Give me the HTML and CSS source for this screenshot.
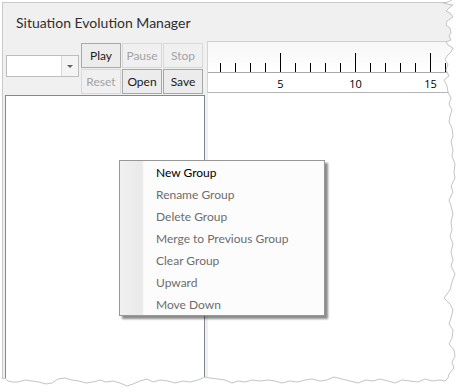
FILE: index.html
```html
<!DOCTYPE html>
<html>
<head>
<meta charset="utf-8">
<link rel="stylesheet" href="styles.css">
</head>
<body>
<div class="window">
  <div class="title">Situation Evolution Manager</div>
  <div class="toolbar">
    <div class="combo">
      <div class="combo-field"></div>
      <div class="combo-btn"><span class="arrow"></span></div>
    </div>
    <div class="buttons">
      <div class="btn">Play</div>
      <div class="btn off">Pause</div>
      <div class="btn off">Stop</div>
      <div class="btn off">Reset</div>
      <div class="btn">Open</div>
      <div class="btn">Save</div>
    </div>
    <div class="ruler">
      <svg class="ruler-svg" width="300" height="50" viewBox="0 0 300 50">
        <rect x="0" y="30" width="300" height="1" fill="#a8a8a8"/>
        <g fill="#000">
          <rect x="12" y="21" width="1" height="9"/>
          <rect x="27" y="21" width="1" height="9"/>
          <rect x="42" y="21" width="1" height="9"/>
          <rect x="57" y="21" width="1" height="9"/>
          <rect x="72" y="11" width="1" height="19"/>
          <rect x="87" y="21" width="1" height="9"/>
          <rect x="102" y="21" width="1" height="9"/>
          <rect x="117" y="21" width="1" height="9"/>
          <rect x="132" y="21" width="1" height="9"/>
          <rect x="147" y="11" width="1" height="19"/>
          <rect x="162" y="21" width="1" height="9"/>
          <rect x="177" y="21" width="1" height="9"/>
          <rect x="192" y="21" width="1" height="9"/>
          <rect x="207" y="21" width="1" height="9"/>
          <rect x="222" y="11" width="1" height="19"/>
          <rect x="237" y="21" width="1" height="9"/>
          <rect x="252" y="21" width="1" height="9"/>
        </g>
        <g class="ruler-labels" fill="#000" text-anchor="middle">
          <text x="72.5" y="46">5</text>
          <text x="147.5" y="46">10</text>
          <text x="222.5" y="46">15</text>
        </g>
      </svg>
    </div>
  </div>
  <div class="content">
    <div class="list"></div>
    <div class="splitter"></div>
    <div class="timeline"></div>
  </div>
</div>

<div class="menu">
  <div class="item">New Group</div>
  <div class="item off">Rename Group</div>
  <div class="item off">Delete Group</div>
  <div class="item off">Merge to Previous Group</div>
  <div class="item off">Clear Group</div>
  <div class="item off">Upward</div>
  <div class="item off">Move Down</div>
</div>

<svg class="torn" width="460" height="392" viewBox="0 0 460 392">
  <path fill="#ffffff" fill-rule="evenodd" d="M-2,-2 H462 V394 H-2 Z M452,-1 L452,0 448,2 443,3 447,4 453,5 449,8 446,11 450,13 453,17 447,21 446,25 450,28 451,33 449,36 451,40 446,42 448,45 453,48 451,52 447,56 445,60 448,64 446,70 449,76 444,80 447,86 448,92 451,98 449,104 452,110 450,116 449,122 452,128 453,136 451,142 453,150 452,156 455,164 454,172 455,178 451,186 453,192 449,200 451,206 453,214 451,222 452,230 450,236 453,244 451,252 453,260 451,266 455,274 452,282 450,290 444,298 450,304 453,310 451,318 449,324 453,330 452,338 449,344 454,350 455,356 452,362 454,368 449,374 448,378 445,381 440,380 432,381 425,379 418,382 410,381 402,380 395,383 388,381 380,379 373,381 366,380 358,383 350,381 342,379 334,377 327,380 320,381 312,379 305,380 298,382 290,381 282,383 275,381 268,380 260,381 252,380 245,382 238,381 232,383 225,380 218,379 210,378 205,377 198,380 190,382 183,381 175,383 168,381 160,380 153,382 147,379 140,381 133,384 127,386 120,383 113,381 106,382 100,380 93,382 86,383 79,381 72,380 65,378 58,379 52,383 46,384 39,382 32,381 25,380 18,382 12,382 8,381 5,378 3,379 -1,379 -1,-1 Z"/>
  <polyline fill="none" stroke="#c4c4c4" stroke-width="1" points="452,0 448,2 443,3 447,4 453,5 449,8 446,11 450,13 453,17 447,21 446,25 450,28 451,33 449,36 451,40 446,42 448,45 453,48 451,52 447,56 445,60 448,64 446,70 449,76 444,80 447,86 448,92 451,98 449,104 452,110 450,116 449,122 452,128 453,136 451,142 453,150 452,156 455,164 454,172 455,178 451,186 453,192 449,200 451,206 453,214 451,222 452,230 450,236 453,244 451,252 453,260 451,266 455,274 452,282 450,290 444,298 450,304 453,310 451,318 449,324 453,330 452,338 449,344 454,350 455,356 452,362 454,368 449,374 448,378 445,381 440,380 432,381 425,379 418,382 410,381 402,380 395,383 388,381 380,379 373,381 366,380 358,383 350,381 342,379 334,377 327,380 320,381 312,379 305,380 298,382 290,381 282,383 275,381 268,380 260,381 252,380 245,382 238,381 232,383 225,380 218,379 210,378 205,377 198,380 190,382 183,381 175,383 168,381 160,380 153,382 147,379 140,381 133,384 127,386 120,383 113,381 106,382 100,380 93,382 86,383 79,381 72,380 65,378 58,379 52,383 46,384 39,382 32,381 25,380 18,382 12,382 8,381 5,378 3,379"/>
</svg>
</body>
</html>
```

FILE: styles.css
```css
html, body {
  margin: 0;
  padding: 0;
  background: #ffffff;
}
body {
  width: 460px;
  height: 392px;
  overflow: hidden;
  position: relative;
  font-family: Lato, "Open Sans", sans-serif;
}
.window {
  margin: 2px 0 0 2px;
  width: 470px;
  height: 400px;
  border-top: 1px solid #c9c9c9;
  border-left: 1px solid #c9c9c9;
  background: #f0f0f0;
}
.title {
  height: 37px;
  padding-top: 1px;
  line-height: 38px;
  padding-left: 13px;
  font-size: 14px;
  color: #2e2e2e;
}
.toolbar {
  display: flex;
  height: 52px;
}
.combo {
  margin: 14px 0 0 3px;
  width: 73px;
  height: 22px;
  box-sizing: border-box;
  border: 1px solid #bdbdbd;
  background: #ffffff;
  display: flex;
}
.combo-field {
  flex: 1;
}
.combo-btn {
  width: 16px;
  border-left: 1px solid #dadada;
  background: #f4f4f4;
  display: flex;
  align-items: center;
  justify-content: center;
}
.arrow {
  width: 0;
  height: 0;
  border-left: 3px solid transparent;
  border-right: 3px solid transparent;
  border-top: 3px solid #606060;
}
.buttons {
  margin: 2px 0 0 2px;
  display: grid;
  grid-template-columns: repeat(3, 40px);
  grid-auto-rows: 25px;
  gap: 1px;
}
.btn {
  box-sizing: border-box;
  border: 1px solid #a8a8a8;
  background: #ececec;
  color: #1a1a1a;
  font-size: 12px;
  display: flex;
  align-items: center;
  justify-content: center;
}
.btn.off {
  border-color: #d8d8d8;
  background: #f0f0f0;
  color: #a3a3a3;
}
.ruler {
  margin-left: 4px;
  flex: 1;
  box-sizing: border-box;
  border-left: 1px solid #d4d4d4;
  border-top: 1px solid #cfcfcf;
  border-bottom: 1px solid #b4b4b4;
  background: linear-gradient(#f7f7f7, #ffffff 60%);
  overflow: hidden;
}
.ruler-svg {
  display: block;
}
.ruler-labels {
  font-family: "Open Sans", sans-serif;
  font-size: 11px;
}
.content {
  display: flex;
  height: 310px;
}
.list {
  margin: 2px 0 0 2px;
  width: 200px;
  box-sizing: border-box;
  border: 1px solid #828790;
  background: #ffffff;
}
.splitter {
  width: 3px;
  background: #f0f0f0;
}
.timeline {
  flex: 1;
  background: #ffffff;
}
.menu {
  position: absolute;
  left: 119px;
  top: 160px;
  width: 206px;
  box-sizing: border-box;
  border: 1px solid #979797;
  background: linear-gradient(90deg, #f1f1f1 0, #e9e9e9 22px, #fcfcfc 24px);
  box-shadow: 3px 3px 2px rgba(0, 0, 0, 0.45);
}
.item {
  height: 21px;
  padding-top: 1px;
  line-height: 22px;
  padding-left: 36px;
  font-size: 12px;
  color: #000000;
}
.item.off {
  color: #6d6d6d;
}
.torn {
  position: absolute;
  left: 0;
  top: 0;
  pointer-events: none;
}
```
